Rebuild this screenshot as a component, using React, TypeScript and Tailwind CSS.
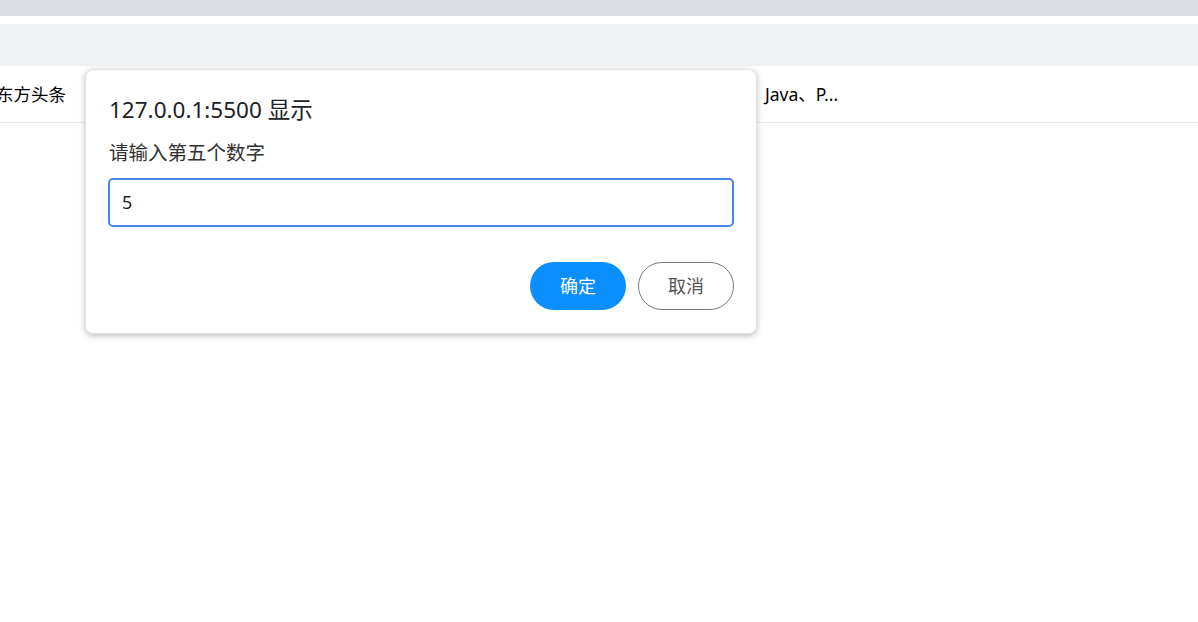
import React from 'react';

const font = { fontFamily: '"Noto Sans", "Noto Sans CJK SC", sans-serif' };

export default function App() {
  return (
    <div className="relative w-[1198px] h-[622px] bg-white overflow-hidden" style={font}>
      {/* browser chrome */}
      <div className="h-[16px] bg-[#d9dce0]" />
      <div className="h-[8px] bg-white" />
      <div className="h-[42px] bg-[#f0f1f3]" />

      {/* page nav row */}
      <div className="h-[57px] border-b border-[#e8e8e8] flex items-center text-[17.5px] text-black">
        <span className="ml-[-4px]">东方头条</span>
        <span className="ml-[699px]">Java、P...</span>
      </div>

      {/* prompt dialog */}
      <div className="absolute left-[85px] top-[69px] w-[672px] h-[265px] bg-white rounded-[8px] border border-[#e2e2e2] shadow-[0_2px_6px_rgba(0,0,0,0.25)] px-[22px] pt-[25px]">
        <div className="text-[22.5px] leading-[30px] text-[#202124] ml-[1px]">127.0.0.1:5500 显示</div>
        <div className="mt-[14px] text-[19.5px] leading-[28px] text-[#303030] ml-[1px]">请输入第五个数字</div>
        <div className="mt-[11px] h-[49px] rounded-[5px] border-2 border-[#4a86e8] flex items-center px-[12px] text-[18px] text-[#202124]">
          5
        </div>
        <div className="mt-[35px] flex justify-end gap-[12px]">
          <button className="w-[96px] h-[48px] rounded-full bg-[#0b8fff] text-white text-[18px]">确定</button>
          <button className="w-[96px] h-[48px] rounded-full border border-[#7a7a7a] text-[#555] text-[18px] bg-white">取消</button>
        </div>
      </div>
    </div>
  );
}
